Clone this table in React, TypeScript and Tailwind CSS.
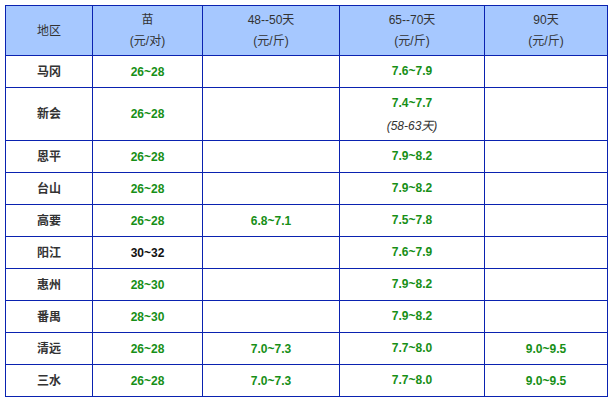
const rows: { name: string; miao: string; miaoBlack?: boolean; d48: string; d65: string; d65Note?: string; d90: string }[] = [
  { name: "马冈", miao: "26~28", d48: "", d65: "7.6~7.9", d90: "" },
  { name: "新会", miao: "26~28", d48: "", d65: "7.4~7.7", d65Note: "(58-63天)", d90: "" },
  { name: "恩平", miao: "26~28", d48: "", d65: "7.9~8.2", d90: "" },
  { name: "台山", miao: "26~28", d48: "", d65: "7.9~8.2", d90: "" },
  { name: "高要", miao: "26~28", d48: "6.8~7.1", d65: "7.5~7.8", d90: "" },
  { name: "阳江", miao: "30~32", miaoBlack: true, d48: "", d65: "7.6~7.9", d90: "" },
  { name: "惠州", miao: "28~30", d48: "", d65: "7.9~8.2", d90: "" },
  { name: "番禺", miao: "28~30", d48: "", d65: "7.9~8.2", d90: "" },
  { name: "清远", miao: "26~28", d48: "7.0~7.3", d65: "7.7~8.0", d90: "9.0~9.5" },
  { name: "三水", miao: "26~28", d48: "7.0~7.3", d65: "7.7~8.0", d90: "9.0~9.5" },
];

const cell = "border border-[#0a22b0] text-center align-middle p-0";
const green = "text-[#178f17] font-bold";

export default function App() {
  return (
    <div className="bg-white w-[614px] h-[402px] pt-[5px] pl-[5px] font-['Liberation_Sans','Noto_Sans_CJK_SC',sans-serif] text-[12px]">
      <table className="table-fixed border-collapse w-[603px]">
        <colgroup>
          <col className="w-[87px]" />
          <col className="w-[110px]" />
          <col className="w-[137px]" />
          <col className="w-[145px]" />
          <col className="w-[123px]" />
        </colgroup>
        <thead>
          <tr className="h-[50px] bg-[#a6c8ff] text-[#333] leading-[21px]">
            <th className={`${cell} font-normal pt-[1px]`}>地区</th>
            <th className={`${cell} font-normal pt-[1px]`}>
              苗<br />(元/对)
            </th>
            <th className={`${cell} font-normal pt-[1px]`}>
              48--50天<br />(元/斤)
            </th>
            <th className={`${cell} font-normal pt-[1px]`}>
              65--70天<br />(元/斤)
            </th>
            <th className={`${cell} font-normal pt-[1px]`}>
              90天<br />(元/斤)
            </th>
          </tr>
        </thead>
        <tbody>
          {rows.map((r) => (
            <tr key={r.name} className={r.d65Note ? "h-[53px]" : "h-[32px]"}>
              <td className={`${cell} font-bold text-[#333]`}>{r.name}</td>
              <td className={`${cell} ${r.miaoBlack ? "font-bold text-[#111]" : green}`}>{r.miao}</td>
              <td className={`${cell} ${green}`}>{r.d48}</td>
              <td className={`${cell} ${green} leading-[23px] ${r.d65Note ? "pt-[2px]" : ""}`}>
                {r.d65}
                {r.d65Note && (
                  <>
                    <br />
                    <span className="italic font-normal text-[#333]">{r.d65Note}</span>
                  </>
                )}
              </td>
              <td className={`${cell} ${green}`}>{r.d90}</td>
            </tr>
          ))}
        </tbody>
      </table>
    </div>
  );
}
